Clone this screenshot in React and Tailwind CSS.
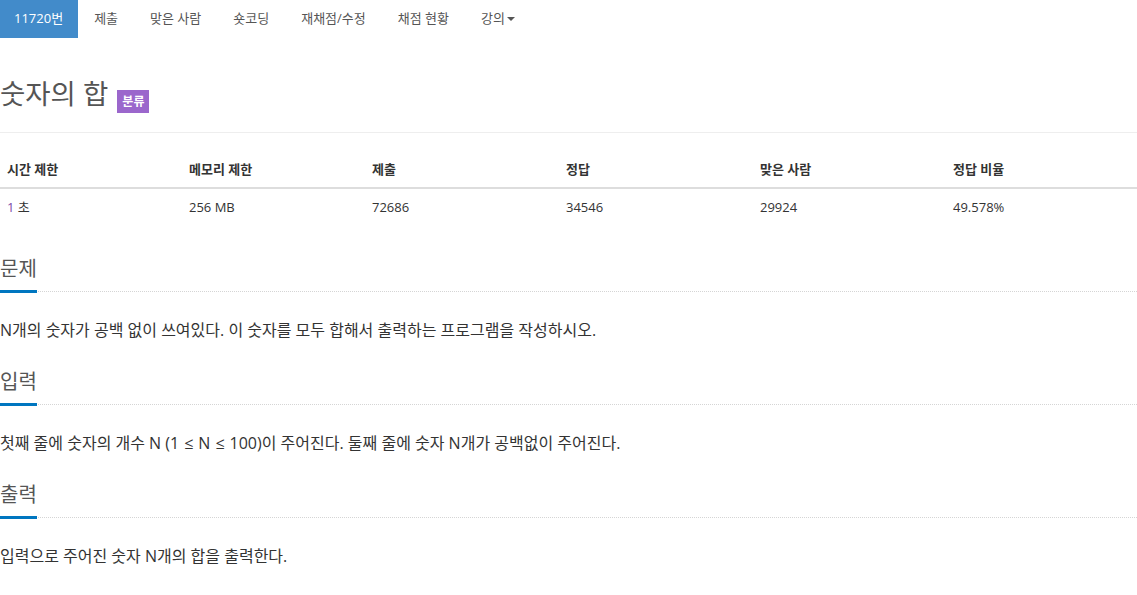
import React from 'react';

const FONT = { fontFamily: '"Open Sans", "Noto Sans CJK KR", sans-serif' };

const tabs = ['제출', '맞은 사람', '숏코딩', '재채점/수정', '채점 현황'];

const cols = [
  { head: '시간 제한', value: '1 초' },
  { head: '메모리 제한', value: '256 MB' },
  { head: '제출', value: '72686' },
  { head: '정답', value: '34546' },
  { head: '맞은 사람', value: '29924' },
  { head: '정답 비율', value: '49.578%' },
];

function Section({ title, children, first }) {
  return (
    <section className={first ? 'mt-[30px]' : 'mt-[27px]'}>
      <div className="border-b border-dotted border-[#d5d5d5] leading-none">
        <h2 className="inline-block text-[20px] leading-[28px] pb-[7px] text-[#555] border-b-[3px] border-[#0076c0] -mb-[2px]">
          {title}
        </h2>
      </div>
      <p className="mt-[27px] text-[16px] leading-[22px] text-[#333]">{children}</p>
    </section>
  );
}

export default function App() {
  return (
    <div className="w-[1137px] h-[595px] bg-white overflow-hidden" style={FONT}>
      {/* tab bar */}
      <nav className="flex h-[38px] text-[13px] text-[#555]">
        <div className="flex items-center pl-[14px] pr-[15px] bg-[#428bca] text-white">11720번</div>
        {tabs.map((t) => (
          <div key={t} className="flex items-center px-[16px]">{t}</div>
        ))}
        <div className="flex items-center px-[16px]">
          강의
          <span className="inline-block w-0 h-0 ml-[2px] border-x-[4px] border-t-[4px] border-x-transparent border-t-[#555]" />
        </div>
      </nav>

      {/* title */}
      <div className="pt-[37px] pb-[19px] border-b border-[#eee] flex items-start">
        <h1 className="text-[27.5px] leading-[38px] text-[#555]">숫자의 합</h1>
        <span className="ml-[9px] mt-[15px] h-[23px] flex items-center px-[5px] bg-[#9b67cc] text-white text-[12px] font-bold">
          분류
        </span>
      </div>

      {/* limits table */}
      <div className="mt-[18px] text-[13px] text-[#333]">
        <div className="grid grid-cols-[182px_183px_194px_194px_193px_1fr] border-b-2 border-[#ddd]">
          {cols.map((c) => (
            <div key={c.head} className="px-[7px] py-[8px] leading-[20px] font-bold">{c.head}</div>
          ))}
        </div>
        <div className="grid grid-cols-[182px_183px_194px_194px_193px_1fr]">
          {cols.map((c, i) => (
            <div key={c.head} className="px-[7px] py-[8px] leading-[20px]">
              {i === 0 ? (
                <>
                  <span className="text-[#7d4aa8]">1</span> 초
                </>
              ) : (
                c.value
              )}
            </div>
          ))}
        </div>
      </div>

      <Section title="문제" first>
        N개의 숫자가 공백 없이 쓰여있다. 이 숫자를 모두 합해서 출력하는 프로그램을 작성하시오.
      </Section>
      <Section title="입력">
        첫째 줄에 숫자의 개수 N (1<span className="px-[5px]">≤</span>N<span className="px-[5px]">≤</span>100)이 주어진다. 둘째 줄에 숫자 N개가 공백없이 주어진다.
      </Section>
      <Section title="출력">입력으로 주어진 숫자 N개의 합을 출력한다.</Section>
    </div>
  );
}
